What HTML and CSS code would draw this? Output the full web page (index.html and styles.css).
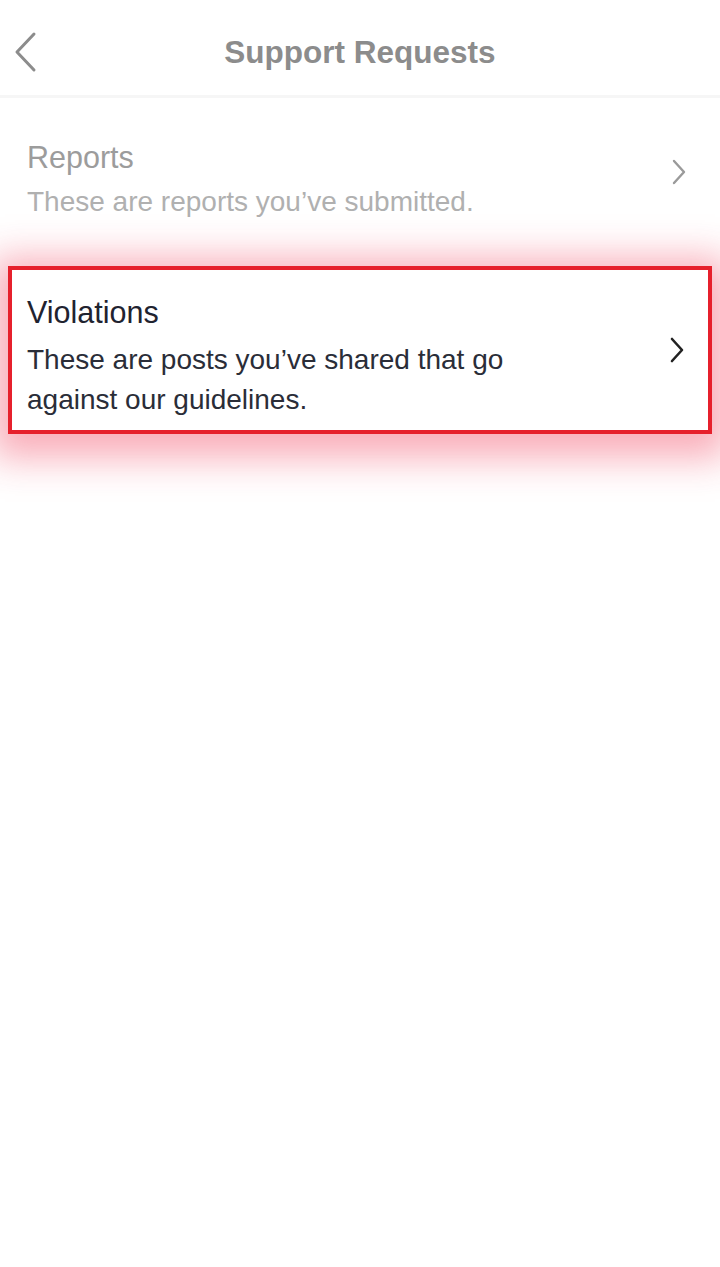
FILE: index.html
```html
<!DOCTYPE html>
<html>
<head>
<meta charset="utf-8">
<link rel="stylesheet" href="styles.css">
</head>
<body>
<div class="header">
  <svg class="back" width="28" height="42" viewBox="0 0 28 42"><path d="M22 3 L5 21 L22 39" fill="none" stroke="#8c8c8c" stroke-width="3" stroke-linecap="round" stroke-linejoin="round"/></svg>
  <div class="title">Support Requests</div>
</div>
<div class="list">
  <div class="row faded">
    <div class="text">
      <div class="row-title">Reports</div>
      <div class="row-sub">These are reports you’ve submitted.</div>
    </div>
    <svg class="chev" width="18" height="28" viewBox="0 0 18 28"><path d="M4 3 L14 14 L4 25" fill="none" stroke="#9a9a9a" stroke-width="2.4" stroke-linecap="round" stroke-linejoin="round"/></svg>
  </div>
  <div class="row highlight">
    <div class="text">
      <div class="row-title">Violations</div>
      <div class="row-sub">These are posts you’ve shared that go<br>against our guidelines.</div>
    </div>
    <svg class="chev" width="18" height="28" viewBox="0 0 18 28"><path d="M4 3 L14 14 L4 25" fill="none" stroke="#222" stroke-width="2.6" stroke-linecap="round" stroke-linejoin="round"/></svg>
  </div>
</div>
</body>
</html>
```
FILE: styles.css
```css
html {
  margin: 0;
  padding: 0;
  background: #fff;
}
body {
  margin: 0;
  padding: 0;
  min-height: 100vh;
  font-family: "Liberation Sans", Arial, sans-serif;
}
.header {
  position: relative;
  height: 95px;
  display: flex;
  align-items: center;
  justify-content: center;
  border-bottom: 3px solid #f6f6f6;
}
.back {
  position: absolute;
  left: 12px;
  top: 31px;
}
.title {
  font-size: 31.5px;
  font-weight: bold;
  color: #8c8c8c;
  margin-top: 9px;
}
.list {
  display: flex;
  flex-direction: column;
  padding-bottom: 60px;
}
.row {
  display: flex;
  align-items: center;
  justify-content: space-between;
}
.faded {
  padding: 42px 32px 0 27px;
  height: 92px;
  align-items: flex-start;
}
.faded .chev {
  margin-top: 18px;
}
.faded .row-title {
  color: #9c9c9c;
}
.faded .row-sub {
  color: #b0b0b0;
  margin-top: 8px;
}
.row-title {
  font-size: 30.5px;
  line-height: 34px;
}
.row-sub {
  font-size: 28px;
  line-height: 40px;
}
.highlight {
  margin: 34px 8px 0 8px;
  height: 160px;
  border: 4px solid #e6202c;
  padding: 0 22px 0 15px;
  box-shadow: 0 8px 36px 16px rgba(240, 40, 70, 0.38);
  background: #fff;
}
.highlight .text {
  margin-top: 14px;
}
.highlight .row-title {
  color: #1f2330;
}
.highlight .row-sub {
  color: #2a2d38;
  margin-top: 11px;
}
.highlight .chev {
  margin-top: 0;
}
```
